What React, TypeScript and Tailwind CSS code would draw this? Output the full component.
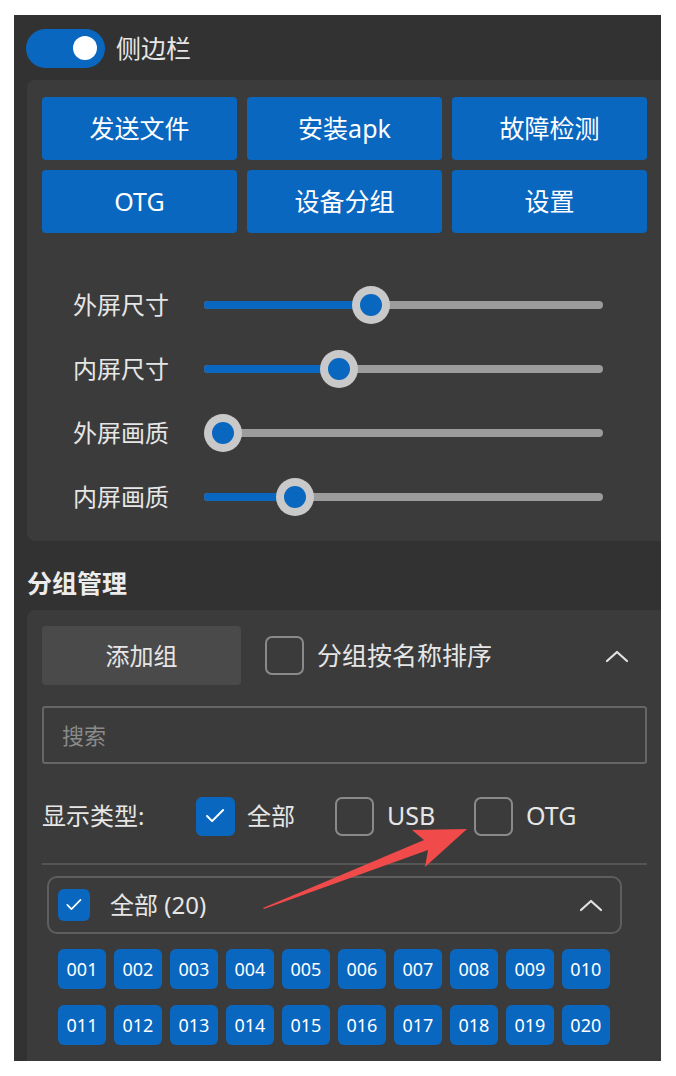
import { Check } from 'lucide-react'

const buttons = ['发送文件', '安装apk', '故障检测', 'OTG', '设备分组', '设置']

const sliders = [
  { label: '外屏尺寸', value: 0.41 },
  { label: '内屏尺寸', value: 0.32 },
  { label: '外屏画质', value: 0 },
  { label: '内屏画质', value: 0.2 },
]

const chips = Array.from({ length: 20 }, (_, i) => String(i + 1).padStart(3, '0'))

function ChevronUp() {
  return (
    <svg width="24" height="14" viewBox="0 0 24 14" fill="none">
      <polyline points="2,12 12,3 22,12" stroke="#e2e2e2" strokeWidth="2.2" strokeLinecap="round" strokeLinejoin="round" />
    </svg>
  )
}

function Slider({ label, value }: { label: string; value: number }) {
  // track 399px, thumb 38px
  const center = 19 + value * (399 - 38)
  return (
    <div className="flex h-16 items-center pl-[46px]">
      <span className="w-[131px] text-[24px] leading-8 text-[#e6e6e6]">{label}</span>
      <div className="relative h-[38px] w-[399px]">
        <div className="absolute top-[15px] left-0 h-2 w-full rounded-full bg-[#9c9c9c]" />
        <div className="absolute top-[15px] left-0 h-2 rounded-full bg-[#0a67c0]" style={{ width: center }} />
        <div
          className="absolute top-0 flex h-[38px] w-[38px] items-center justify-center rounded-full bg-[#c9c9c9]"
          style={{ left: center - 19 }}
        >
          <div className="h-[22px] w-[22px] rounded-full bg-[#0a67c0]" />
        </div>
      </div>
    </div>
  )
}

function Box({ checked, size = 39 }: { checked?: boolean; size?: number }) {
  if (checked) {
    return (
      <div
        className="flex shrink-0 items-center justify-center rounded-[6px] bg-[#0a67c0]"
        style={{ width: size, height: size }}
      >
        <Check className="text-white" size={size * 0.62} strokeWidth={2} />
      </div>
    )
  }
  return (
    <div
      className="shrink-0 rounded-[7px] border-2 border-[#8a8a8a]"
      style={{ width: size, height: size }}
    />
  )
}

export default function App() {
  return (
    <div className="min-h-screen bg-white pt-[15px] pl-[14px] font-['Noto_Sans','Noto_Sans_CJK_SC',sans-serif]">
      <div className="relative h-[1046px] w-[647px] overflow-hidden bg-[#323232]">
        {/* sidebar toggle */}
        <div className="mt-[13px] ml-[12px] flex h-10 items-center gap-[11px]">
          <div className="flex h-[39px] w-[79px] items-center justify-end rounded-full bg-[#0a67c0] pr-[8px]">
            <div className="h-6 w-6 rounded-full bg-white" />
          </div>
          <span className="text-[25px] leading-8 text-[#e6e6e6]">侧边栏</span>
        </div>

        {/* controls card */}
        <div className="mt-[12px] ml-[13px] w-[660px] rounded-l-[8px] bg-[#3b3b3b] pt-[17px] pb-[12px] pl-[15px]">
          <div className="grid w-[605px] grid-cols-3 gap-[10px]">
            {buttons.map((b) => (
              <div
                key={b}
                className="flex h-[63px] items-center justify-center rounded-[4px] bg-[#0a67c0] text-[25px] text-white"
              >
                {b}
              </div>
            ))}
          </div>
          <div className="mt-10 -ml-[15px]">
            {sliders.map((s) => (
              <Slider key={s.label} {...s} />
            ))}
          </div>
        </div>

        <div className="mt-[26px] ml-[13px] text-[25px] leading-8 font-bold text-[#ececec]">分组管理</div>

        {/* group card */}
        <div className="mt-[11px] ml-[13px] h-[500px] w-[660px] rounded-l-[8px] bg-[#3b3b3b] pt-[16px] pl-[15px]">
          <div className="flex h-[59px] w-[605px] items-center">
            <div className="flex h-[59px] w-[199px] items-center justify-center rounded-[4px] bg-[#4a4a4a] text-[24px] text-[#e6e6e6]">
              添加组
            </div>
            <div className="ml-[24px]">
              <Box />
            </div>
            <span className="ml-[13px] text-[25px] text-[#e6e6e6]">分组按名称排序</span>
            <div className="mr-[18px] ml-auto">
              <ChevronUp />
            </div>
          </div>

          <div className="mt-[21px] flex h-[58px] w-[605px] items-center rounded-[3px] border-2 border-[#666] pl-[18px] text-[22px] text-[#8a8a8a]">
            搜索
          </div>

          <div className="mt-[32px] flex h-10 items-center text-[24px] text-[#e6e6e6]">
            <span className="w-[154px]">显示类型:</span>
            <Box checked />
            <span className="ml-[12px] w-[88px]">全部</span>
            <Box />
            <span className="ml-[13px] w-[87px] text-[25px]">USB</span>
            <Box />
            <span className="ml-[13px] text-[25px]">OTG</span>
          </div>

          <div className="mt-[27px] h-[2px] w-[605px] bg-[#555]" />

          <div className="mt-[11px] ml-[5px] flex h-[58px] w-[575px] items-center rounded-[10px] border-2 border-[#5e5e5e] pr-[17px] pl-[9px]">
            <Box checked size={32} />
            <span className="ml-[20px] text-[24px] text-[#e6e6e6]">全部 (20)</span>
            <div className="ml-auto">
              <ChevronUp />
            </div>
          </div>

          <div className="mt-[15px] ml-[16px] grid w-[552px] grid-cols-10 gap-x-[7.8px] gap-y-[16px]">
            {chips.map((c) => (
              <div
                key={c}
                className="flex h-10 w-12 items-center justify-center rounded-[6px] bg-[#0a67c0] text-[18px] text-white"
              >
                {c}
              </div>
            ))}
          </div>
        </div>

        {/* annotation arrow */}
        <svg className="pointer-events-none absolute top-0 left-0" width="647" height="1046" viewBox="14 15 647 1046">
          <polygon
            points="263,908 424,840 412,830 467,829 425,867 428,850 264,909"
            fill="#f04a4a"
          />
        </svg>
      </div>
    </div>
  )
}
